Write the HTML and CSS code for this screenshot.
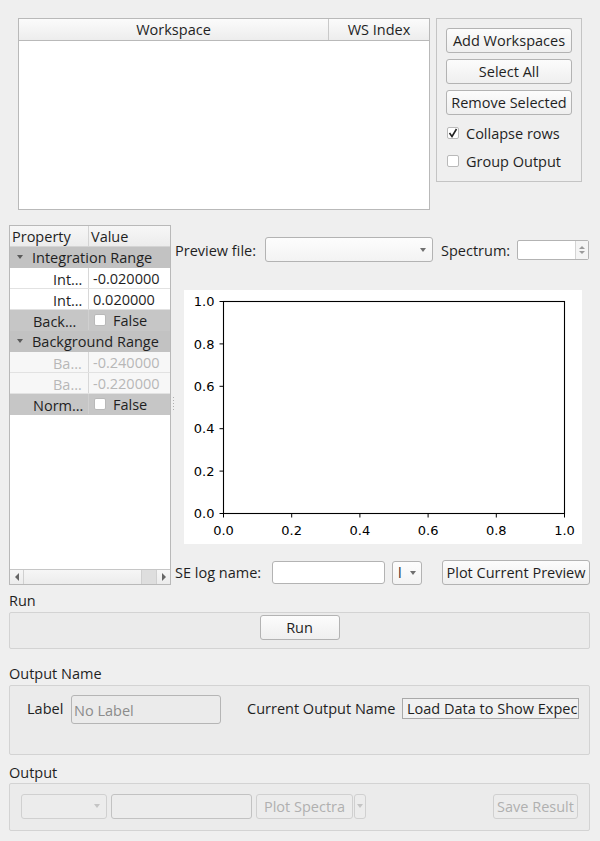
FILE: index.html
```html
<!DOCTYPE html>
<html>
<head>
<meta charset="utf-8">
<link rel="stylesheet" href="styles.css">
</head>
<body>
<div class="window">
  <div class="top">
    <div class="ws-table">
      <div class="ws-head"><div class="ws-h1">Workspace</div><div class="ws-h2">WS Index</div></div>
    </div>
    <div class="ws-group">
      <div class="btn-col">
        <div class="btn">Add Workspaces</div>
        <div class="btn">Select All</div>
        <div class="btn">Remove Selected</div>
      </div>
      <div class="chk-list">
        <div class="chk"><span class="box"><svg width="10" height="10" viewBox="0 0 10 10"><polyline points="1.5,5 4,8.5 8.5,1" fill="none" stroke="#222" stroke-width="1.6"/></svg></span><span>Collapse rows</span></div>
        <div class="chk"><span class="box"></span><span>Group Output</span></div>
      </div>
    </div>
  </div>

  <div class="middle">
    <div class="props">
      <div class="p-head"><div class="p-c1">Property</div><div class="p-c2">Value</div></div>
      <div class="p-row group"><span class="tri"></span><span>Integration Range</span></div>
      <div class="p-row"><div class="p-c1 child">Int…</div><div class="p-c2">-0.020000</div></div>
      <div class="p-row"><div class="p-c1 child">Int…</div><div class="p-c2">0.020000</div></div>
      <div class="p-row toplevel"><div class="p-c1 lvl0">Back…</div><div class="p-c2"><span class="box small"></span>False</div></div>
      <div class="p-row group"><span class="tri"></span><span>Background Range</span></div>
      <div class="p-row disabled"><div class="p-c1 child">Ba…</div><div class="p-c2">-0.240000</div></div>
      <div class="p-row disabled"><div class="p-c1 child">Ba…</div><div class="p-c2">-0.220000</div></div>
      <div class="p-row toplevel"><div class="p-c1 lvl0">Norm…</div><div class="p-c2"><span class="box small"></span>False</div></div>
      <div class="p-empty"></div>
      <div class="hscroll">
        <div class="sb-btn"><span class="tri-left"></span></div>
        <div class="sb-track"><div class="sb-handle"></div></div>
        <div class="sb-btn"><span class="tri-right"></span></div>
      </div>
    </div>
    <div class="splitter"><div class="dots"></div></div>
    <div class="preview">
      <div class="row-preview">
        <span class="lbl lbl-file">Preview file:</span>
        <div class="combo file-combo"><span class="arrow"></span></div>
        <span class="lbl spec-lbl">Spectrum:</span>
        <div class="spin"><div class="spin-field"></div><div class="spin-btns"><span class="tri-up"></span><span class="tri-down"></span></div></div>
      </div>
      <div class="plot">
        <svg width="398" height="254" viewBox="0 0 398 254">
          <rect x="0" y="0" width="398" height="254" fill="#ffffff"/>
          <rect x="39.5" y="11.5" width="341" height="212" fill="none" stroke="#000" stroke-width="1.1"/>
          <g stroke="#000" stroke-width="1">
            <line x1="35.5" y1="11.5" x2="39.5" y2="11.5"/>
            <line x1="35.5" y1="53.9" x2="39.5" y2="53.9"/>
            <line x1="35.5" y1="96.3" x2="39.5" y2="96.3"/>
            <line x1="35.5" y1="138.7" x2="39.5" y2="138.7"/>
            <line x1="35.5" y1="181.1" x2="39.5" y2="181.1"/>
            <line x1="35.5" y1="223.5" x2="39.5" y2="223.5"/>
            <line x1="39.5" y1="223.5" x2="39.5" y2="227.5"/>
            <line x1="107.7" y1="223.5" x2="107.7" y2="227.5"/>
            <line x1="175.9" y1="223.5" x2="175.9" y2="227.5"/>
            <line x1="244.1" y1="223.5" x2="244.1" y2="227.5"/>
            <line x1="312.3" y1="223.5" x2="312.3" y2="227.5"/>
            <line x1="380.5" y1="223.5" x2="380.5" y2="227.5"/>
          </g>
          <g class="tick" text-anchor="end">
            <text x="30.5" y="16.2">1.0</text>
            <text x="30.5" y="58.6">0.8</text>
            <text x="30.5" y="101">0.6</text>
            <text x="30.5" y="143.4">0.4</text>
            <text x="30.5" y="185.8">0.2</text>
            <text x="30.5" y="228.2">0.0</text>
          </g>
          <g class="tick" text-anchor="middle">
            <text x="39.5" y="244.5">0.0</text>
            <text x="107.7" y="244.5">0.2</text>
            <text x="175.9" y="244.5">0.4</text>
            <text x="244.1" y="244.5">0.6</text>
            <text x="312.3" y="244.5">0.8</text>
            <text x="380.5" y="244.5">1.0</text>
          </g>
        </svg>
      </div>
      <div class="row-se">
        <span class="lbl lbl-se">SE log name:</span>
        <div class="field se-field"></div>
        <div class="combo se-combo"><span class="se-text">l</span><span class="arrow"></span></div>
        <div class="btn plot-btn">Plot Current Preview</div>
      </div>
    </div>
  </div>

  <div class="sec-title run-title">Run</div>
  <div class="grp run-grp">
    <div class="btn run-btn">Run</div>
  </div>

  <div class="sec-title name-title">Output Name</div>
  <div class="grp name-grp">
    <div class="name-row">
      <span class="lbl lbl-label">Label</span>
      <div class="field label-field">No Label</div>
      <span class="lbl cur-lbl">Current Output Name</span>
      <div class="cur-box">Load Data to Show Expec</div>
    </div>
  </div>

  <div class="sec-title out-title">Output</div>
  <div class="grp out-grp">
    <div class="combo dis out-combo"><span class="arrow light"></span></div>
    <div class="field dis out-field"></div>
    <div class="btn dis spectra-btn">Plot Spectra</div>
    <div class="btn dis spectra-drop"><span class="arrow light"></span></div>
    <div class="spacer"></div>
    <div class="btn dis save-btn">Save Result</div>
  </div>
</div>
</body>
</html>
```

FILE: styles.css
```css
html, body {
  margin: 0;
  padding: 0;
  background: #efefef;
}
body {
  font-family: "Open Sans", "Noto Sans", sans-serif;
  font-size: 14.5px;
  color: #1f1f1f;
}
.window {
  width: 600px;
  height: 841px;
  overflow: hidden;
}

/* ---------- top ---------- */
.top {
  display: flex;
  align-items: flex-start;
  gap: 6px;
  padding: 18px 0 0 18px;
}
.ws-table {
  width: 412px;
  height: 192px;
  box-sizing: border-box;
  border: 1px solid #b9b9b9;
  background: #ffffff;
}
.ws-head {
  display: flex;
  height: 21px;
  border-bottom: 1px solid #b9b9b9;
  background: linear-gradient(#fbfbfb, #ededed);
  line-height: 21px;
}
.ws-h1 {
  width: 309px;
  border-right: 1px solid #c9c9c9;
  text-align: center;
}
.ws-h2 {
  flex: 1;
  text-align: center;
}
.ws-group {
  width: 146px;
  height: 164px;
  box-sizing: border-box;
  border: 1px solid #c4c4c4;
  padding: 9px 0 0 9px;
}
.btn-col {
  display: flex;
  flex-direction: column;
  gap: 6px;
}
.btn {
  box-sizing: border-box;
  border: 1px solid #b3b3b3;
  border-radius: 3px;
  background: linear-gradient(#fcfcfc, #efefef);
  text-align: center;
  height: 25px;
  line-height: 23px;
  white-space: nowrap;
}
.btn-col .btn {
  width: 126px;
}
.chk-list {
  display: flex;
  flex-direction: column;
  gap: 6px;
  margin-top: 7px;
}
.chk {
  display: flex;
  align-items: center;
  height: 22px;
  gap: 7px;
  padding-left: 1px;
}
.box {
  width: 12px;
  height: 12px;
  box-sizing: border-box;
  border: 1px solid #b9b9b9;
  border-radius: 2px;
  background: #ffffff;
  display: inline-flex;
  align-items: center;
  justify-content: center;
  flex: none;
}

/* ---------- middle ---------- */
.middle {
  display: flex;
  margin-top: 15px;
  padding-left: 9px;
}
.props {
  width: 162px;
  height: 360px;
  box-sizing: border-box;
  border: 1px solid #b9b9b9;
  background: #ffffff;
  display: flex;
  flex-direction: column;
}
.p-head {
  display: flex;
  height: 21px;
  line-height: 22px;
  background: linear-gradient(#f7f7f7, #ececec);
  border-bottom: 1px solid #d4d4d4;
  box-sizing: border-box;
}
.p-head .p-c1 {
  width: 79px;
  padding-left: 2px;
  box-sizing: border-box;
  border-right: 1px solid #d4d4d4;
}
.p-head .p-c2 {
  padding-left: 2px;
}
.p-row {
  display: flex;
  height: 21px;
  line-height: 21px;
  padding-top: 1px;
  box-sizing: border-box;
  border-bottom: 1px solid #e2e2e2;
  white-space: nowrap;
}
.p-row .p-c1 {
  width: 79px;
  box-sizing: border-box;
  border-right: 1px solid #d8d8d8;
  overflow: hidden;
  margin-top: -1px;
  padding-top: 1px;
}
.p-row .p-c2 {
  flex: 1;
  padding-left: 4px;
  display: flex;
  align-items: center;
  overflow: hidden;
}
.p-c1.child {
  padding-left: 43px;
}
.p-c1.lvl0 {
  padding-left: 23px;
}
.p-row.group {
  background: #c2c2c2;
  border-bottom: 1px solid #c2c2c2;
  align-items: center;
}
.p-row.toplevel {
  background: #c6c6c6;
  border-bottom: 1px solid #c6c6c6;
}
.p-row.toplevel .p-c1 {
  border-right: 1px solid #d0d0d0;
}
.p-row.disabled {
  background: #f7f7f7;
  color: #b7b7b7;
}
.tri {
  width: 0;
  height: 0;
  border-left: 3.5px solid transparent;
  border-right: 3.5px solid transparent;
  border-top: 4px solid #5a5a5a;
  margin-left: 7px;
  margin-right: 9px;
  margin-top: -1px;
}
.box.small {
  margin-right: 7px;
  margin-left: 1px;
  margin-top: -1px;
}
.p-empty {
  flex: 1;
}
.hscroll {
  display: flex;
  height: 14px;
  border-top: 1px solid #c6c6c6;
  background: linear-gradient(#f6f6f6, #ececec);
}
.sb-btn {
  width: 13px;
  display: flex;
  align-items: center;
  justify-content: center;
  border-right: 1px solid #d0d0d0;
}
.sb-btn:last-child {
  border-right: none;
  border-left: 1px solid #d0d0d0;
}
.sb-track {
  flex: 1;
  display: flex;
  justify-content: flex-end;
}
.sb-handle {
  width: 14px;
  background: #dedede;
  border-left: 1px solid #cfcfcf;
}
.tri-left {
  width: 0; height: 0;
  border-top: 4px solid transparent;
  border-bottom: 4px solid transparent;
  border-right: 4px solid #666;
}
.tri-right {
  width: 0; height: 0;
  border-top: 4px solid transparent;
  border-bottom: 4px solid transparent;
  border-left: 4px solid #666;
}
.splitter {
  width: 4px;
  display: flex;
  justify-content: center;
}
.dots {
  margin-top: 172px;
  width: 1px;
  height: 14px;
  background: repeating-linear-gradient(#b0b0b0 0 1px, transparent 1px 3px);
}
.preview {
  width: 415px;
  display: flex;
  flex-direction: column;
}
.lbl {
  white-space: nowrap;
  flex: none;
}
.row-preview {
  display: flex;
  align-items: center;
  margin-top: 12px;
  height: 25px;
}
.row-preview .lbl {
  padding-top: 2px;
}
.lbl-file {
  width: 90px;
}
.combo {
  box-sizing: border-box;
  border: 1px solid #b3b3b3;
  border-radius: 3px;
  background: linear-gradient(#fdfdfd, #f3f3f3);
  display: flex;
  align-items: center;
  justify-content: flex-end;
  height: 25px;
  flex: none;
}
.arrow {
  width: 0; height: 0;
  border-left: 3.5px solid transparent;
  border-right: 3.5px solid transparent;
  border-top: 4px solid #707070;
  margin-right: 6px;
}
.arrow.light {
  border-top-color: #c4c4c4;
}
.file-combo {
  width: 168px;
}
.spec-lbl {
  margin-left: 8px;
  width: 76px;
}
.spin {
  width: 72px;
  height: 20px;
  box-sizing: border-box;
  border: 1px solid #b3b3b3;
  border-radius: 2px;
  background: #ffffff;
  display: flex;
  flex: none;
}
.spin-field {
  flex: 1;
}
.spin-btns {
  width: 12px;
  border-left: 1px solid #d4d4d4;
  background: #f4f4f4;
  display: flex;
  flex-direction: column;
  align-items: center;
  justify-content: center;
  gap: 2px;
}
.tri-up {
  width: 0; height: 0;
  border-left: 3px solid transparent;
  border-right: 3px solid transparent;
  border-bottom: 3px solid #9a9a9a;
}
.tri-down {
  width: 0; height: 0;
  border-left: 3px solid transparent;
  border-right: 3px solid transparent;
  border-top: 3px solid #9a9a9a;
}
.plot {
  margin-top: 28px;
  margin-left: 9px;
  width: 398px;
  height: 254px;
}
.plot svg {
  display: block;
}
.tick {
  font-family: "DejaVu Sans", sans-serif;
  font-size: 13px;
  fill: #000;
}
.row-se {
  display: flex;
  align-items: center;
  margin-top: 16px;
  height: 25px;
}
.lbl-se {
  width: 97px;
}
.field {
  box-sizing: border-box;
  border: 1px solid #b3b3b3;
  border-radius: 3px;
  background: #ffffff;
  height: 24px;
  flex: none;
}
.se-field {
  width: 113px;
  height: 23px;
}
.se-combo {
  width: 30px;
  margin-left: 7px;
  height: 24px;
  justify-content: space-between;
}
.se-text {
  padding-left: 5px;
  color: #333;
}
.se-combo .arrow {
  margin-right: 5px;
}
.plot-btn {
  margin-left: 20px;
  width: 148px;
  height: 25px;
}

/* ---------- bottom sections ---------- */
.sec-title {
  margin-left: 9px;
  height: 19px;
  line-height: 19px;
}
.run-title {
  margin-top: 6px;
}
.name-title {
  margin-top: 15px;
}
.out-title {
  margin-top: 8px;
}
.grp {
  margin-left: 9px;
  width: 581px;
  box-sizing: border-box;
  border: 1px solid #d3d3d3;
  border-radius: 2px;
  background: #ebebeb;
}
.run-grp {
  height: 37px;
  margin-top: 2px;
  display: flex;
  justify-content: center;
  padding-top: 2px;
}
.run-btn {
  width: 80px;
  height: 25px;
}
.name-grp {
  height: 70px;
  margin-top: 2px;
  padding: 9px 0 0 17px;
}
.name-row {
  display: flex;
  align-items: center;
  height: 29px;
}
.lbl-label {
  width: 44px;
  margin-top: -3px;
}
.label-field {
  width: 150px;
  height: 29px;
  background: #ebebeb;
  color: #8c8c8c;
  line-height: 29px;
  padding-left: 2px;
  border-color: #b5b5b5;
}
.cur-lbl {
  margin-left: 26px;
  width: 155px;
  margin-top: -3px;
}
.cur-box {
  width: 177px;
  height: 21px;
  box-sizing: border-box;
  border: 1px solid #a9a9a9;
  background: #f1f1f1;
  line-height: 19px;
  padding-left: 4px;
  white-space: nowrap;
  overflow: hidden;
  flex: none;
  margin-top: -3px;
}
.out-grp {
  margin-top: 1px;
  height: 48px;
  display: flex;
  align-items: center;
  padding: 0 11px 2px 11px;
}
.dis {
  border-color: #d0d0d0;
  background: #ececec;
  color: #b0b0b0;
}
.out-combo {
  width: 86px;
  height: 25px;
}
.out-field {
  width: 141px;
  height: 25px;
  margin-left: 4px;
  border-color: #c2c2c2;
}
.spectra-btn {
  width: 97px;
  margin-left: 4px;
  height: 25px;
}
.spectra-drop {
  width: 12px;
  margin-left: 1px;
  height: 25px;
  display: flex;
  align-items: center;
  justify-content: center;
}
.spectra-drop .arrow {
  margin-right: 0;
}
.spacer {
  flex: 1;
}
.save-btn {
  width: 85px;
  height: 25px;
}
```
